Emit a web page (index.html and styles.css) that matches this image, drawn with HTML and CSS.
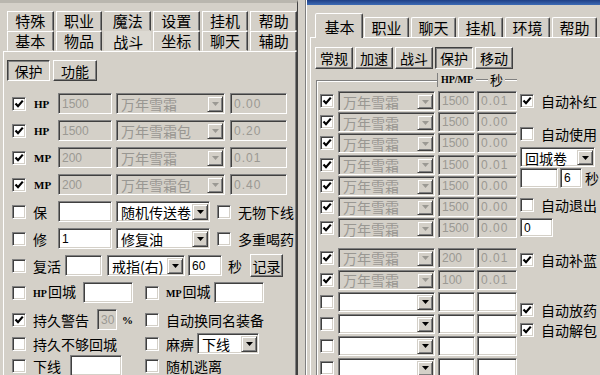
FILE: index.html
```html
<!DOCTYPE html>
<html><head><meta charset="utf-8"><link rel="stylesheet" href="styles.css"></head>
<body>
<svg class="defs" width="0" height="0"><defs>
<symbol id="ck" viewBox="0 0 10 10"><path d="M1.5 4.5 4 7.2 8.8 1.6" fill="none" stroke="#000" stroke-width="2.2"/></symbol>
<symbol id="dn" viewBox="0 0 7 4"><path d="M0 0h7L3.5 4z"/></symbol>
</defs></svg>
<div class="lwin">
  <div class="ltabs">
    <span class="tab">特殊</span><span class="tab">职业</span><span class="tab top-sel">魔法</span><span class="tab">设置</span><span class="tab">挂机</span><span class="tab">帮助</span>
    <span class="tab">基本</span><span class="tab">物品</span><span class="tab sel">战斗</span><span class="tab">坐标</span><span class="tab">聊天</span><span class="tab">辅助</span>
  </div>
  <div class="lpanel">
    <div class="subtabs lsub"><span class="btn pressed w43">保护</span><span class="btn w44">功能</span></div>
    <div class="lrows">
      <div class="r">
        <span class="cb on"><svg><use href="#ck"/></svg></span><span class="lab hp w25">HP</span>
        <span class="inp dis w54">1500</span>
        <span class="sel dis w109 ml4"><span class="st">万年雪霜</span><span class="arr"><svg><use href="#dn"/></svg></span></span>
        <span class="inp dis w57 ml5 sp">0.00</span>
      </div>
      <div class="r">
        <span class="cb on"><svg><use href="#ck"/></svg></span><span class="lab hp w25">HP</span>
        <span class="inp dis w54">1500</span>
        <span class="sel dis w109 ml4"><span class="st">万年雪霜包</span><span class="arr"><svg><use href="#dn"/></svg></span></span>
        <span class="inp dis w57 ml5 sp">0.20</span>
      </div>
      <div class="r">
        <span class="cb on"><svg><use href="#ck"/></svg></span><span class="lab hp w25">MP</span>
        <span class="inp dis w54">200</span>
        <span class="sel dis w109 ml4"><span class="st">万年雪霜</span><span class="arr"><svg><use href="#dn"/></svg></span></span>
        <span class="inp dis w57 ml5 sp">0.01</span>
      </div>
      <div class="r">
        <span class="cb on"><svg><use href="#ck"/></svg></span><span class="lab hp w25">MP</span>
        <span class="inp dis w54">200</span>
        <span class="sel dis w109 ml4"><span class="st">万年雪霜包</span><span class="arr"><svg><use href="#dn"/></svg></span></span>
        <span class="inp dis w57 ml5 sp">0.40</span>
      </div>
      <div class="r">
        <span class="cb"></span><span class="lab w25">保</span>
        <span class="inp w54"></span>
        <span class="sel w94 ml4"><span class="st">随机传送卷</span><span class="arr"><svg><use href="#dn"/></svg></span></span>
        <span class="cb ml7"></span><span class="lab ml6">无物下线</span>
      </div>
      <div class="r">
        <span class="cb"></span><span class="lab w25">修</span>
        <span class="inp w54">1</span>
        <span class="sel w94 ml4"><span class="st">修复油</span><span class="arr"><svg><use href="#dn"/></svg></span></span>
        <span class="cb ml7"></span><span class="lab ml6">多重喝药</span>
      </div>
      <div class="r">
        <span class="cb"></span><span class="lab w32">复活</span>
        <span class="inp w37"></span>
        <span class="sel w78 ml5"><span class="st">戒指(右)</span><span class="arr"><svg><use href="#dn"/></svg></span></span>
        <span class="inp w34 ml3">60</span>
        <span class="lab ml6">秒</span>
        <span class="btn w33 h23 ml8">记录</span>
      </div>
      <div class="r">
        <span class="half"><span class="cb"></span><span class="lab w50"><b class="hpsm">HP</b>回城</span><span class="inp w50"></span></span>
        <span class="cb"></span><span class="lab ml8 w48"><b class="hpsm">MP</b>回城</span><span class="inp w50"></span>
      </div>
      <div class="r mb3">
        <span class="half"><span class="cb on"><svg><use href="#ck"/></svg></span><span class="lab w64">持久警告</span><span class="inp dis w20">30</span><span class="lab ml5 pct">%</span></span>
        <span class="cb"></span><span class="lab ml8">自动换同名装备</span>
      </div>
      <div class="r mb1">
        <span class="half"><span class="cb"></span><span class="lab">持久不够回城</span></span>
        <span class="cb"></span><span class="lab ml8 w31">麻痹</span>
        <span class="sel w62"><span class="st">下线</span><span class="arr"><svg><use href="#dn"/></svg></span></span>
      </div>
      <div class="r">
        <span class="half"><span class="cb"></span><span class="lab w37">下线</span><span class="inp w52"></span></span>
        <span class="cb"></span><span class="lab ml8">随机逃离</span>
      </div>
    </div>
  </div>
</div>
<div class="gap"></div>
<div class="rwin">
  <div class="rtitle"></div>
  <div class="rtabs">
    <span class="rtab sel">基本</span><span class="rtab">职业</span><span class="rtab">聊天</span><span class="rtab">挂机</span><span class="rtab">环境</span><span class="rtab">帮助</span>
  </div>
  <div class="rpanel">
    <div class="subtabs rsub">
      <span class="btn w38">常规</span><span class="btn w38">加速</span><span class="btn w38">战斗</span><span class="btn pressed w38">保护</span><span class="btn w38">移动</span>
    </div>
    <div class="rbody">
      <div class="grp">
        <div class="ghead">
          <span class="gl1"></span>
          <span class="glab"><b>HP/MP</b></span>
          <span class="glab2"><span class="ln"></span><span class="gt">秒</span><span class="ln"></span></span>
        </div>
        <div class="glist">
          <div class="gr"><span class="cb on"><svg><use href="#ck"/></svg></span><span class="sel dis w97 ml4"><span class="st">万年雪霜</span><span class="arr"><svg><use href="#dn"/></svg></span></span><span class="inp dis w37 ml3">1500</span><span class="inp dis w40 ml2 sp">0.01</span></div>
          <div class="gr"><span class="cb on"><svg><use href="#ck"/></svg></span><span class="sel dis w97 ml4"><span class="st">万年雪霜</span><span class="arr"><svg><use href="#dn"/></svg></span></span><span class="inp dis w37 ml3">1500</span><span class="inp dis w40 ml2 sp">0.00</span></div>
          <div class="gr"><span class="cb on"><svg><use href="#ck"/></svg></span><span class="sel dis w97 ml4"><span class="st">万年雪霜</span><span class="arr"><svg><use href="#dn"/></svg></span></span><span class="inp dis w37 ml3">1500</span><span class="inp dis w40 ml2 sp">0.00</span></div>
          <div class="gr"><span class="cb on"><svg><use href="#ck"/></svg></span><span class="sel dis w97 ml4"><span class="st">万年雪霜</span><span class="arr"><svg><use href="#dn"/></svg></span></span><span class="inp dis w37 ml3">1500</span><span class="inp dis w40 ml2 sp">0.01</span></div>
          <div class="gr"><span class="cb on"><svg><use href="#ck"/></svg></span><span class="sel dis w97 ml4"><span class="st">万年雪霜</span><span class="arr"><svg><use href="#dn"/></svg></span></span><span class="inp dis w37 ml3">1500</span><span class="inp dis w40 ml2 sp">0.00</span></div>
          <div class="gr"><span class="cb on"><svg><use href="#ck"/></svg></span><span class="sel dis w97 ml4"><span class="st">万年雪霜</span><span class="arr"><svg><use href="#dn"/></svg></span></span><span class="inp dis w37 ml3">1500</span><span class="inp dis w40 ml2 sp">0.00</span></div>
          <div class="gr"><span class="cb on"><svg><use href="#ck"/></svg></span><span class="sel dis w97 ml4"><span class="st">万年雪霜</span><span class="arr"><svg><use href="#dn"/></svg></span></span><span class="inp dis w37 ml3">1500</span><span class="inp dis w40 ml2 sp">0.00</span></div>
          <div class="gr b first"><span class="cb on"><svg><use href="#ck"/></svg></span><span class="sel dis w97 ml4"><span class="st">万年雪霜</span><span class="arr"><svg><use href="#dn"/></svg></span></span><span class="inp dis w37 ml3">200</span><span class="inp dis w40 ml2 sp">0.01</span></div>
          <div class="gr b"><span class="cb on"><svg><use href="#ck"/></svg></span><span class="sel dis w97 ml4"><span class="st">万年雪霜</span><span class="arr"><svg><use href="#dn"/></svg></span></span><span class="inp dis w37 ml3">100</span><span class="inp dis w40 ml2 sp">0.01</span></div>
          <div class="gr b"><span class="cb"></span><span class="sel w97 ml4"><span class="st"></span><span class="arr"><svg><use href="#dn"/></svg></span></span><span class="inp w37 ml3"></span><span class="inp w40 ml2"></span></div>
          <div class="gr b"><span class="cb"></span><span class="sel w97 ml4"><span class="st"></span><span class="arr"><svg><use href="#dn"/></svg></span></span><span class="inp w37 ml3"></span><span class="inp w40 ml2"></span></div>
          <div class="gr b"><span class="cb"></span><span class="sel w97 ml4"><span class="st"></span><span class="arr"><svg><use href="#dn"/></svg></span></span><span class="inp w37 ml3"></span><span class="inp w40 ml2"></span></div>
          <div class="gr b"><span class="cb"></span><span class="sel w97 ml4"><span class="st"></span><span class="arr"><svg><use href="#dn"/></svg></span></span><span class="inp w37 ml3"></span><span class="inp w40 ml2"></span></div>
        </div>
      </div>
      <div class="rcol">
        <div class="cr"><span class="cb on"><svg><use href="#ck"/></svg></span><span class="lab ml7">自动补红</span></div>
        <div class="cr mt13"><span class="cb"></span><span class="lab ml7">自动使用</span></div>
        <span class="sel w75 mt3"><span class="st">回城卷</span><span class="arr"><svg><use href="#dn"/></svg></span></span>
        <div class="cr mt1"><span class="inp w38"></span><span class="inp w22 ml2">6</span><span class="lab ml3">秒</span></div>
        <div class="cr mt7"><span class="cb"></span><span class="lab ml7">自动退出</span></div>
        <span class="inp w33 h19 mt3">0</span>
        <div class="cr mt13"><span class="cb on"><svg><use href="#ck"/></svg></span><span class="lab ml7">自动补蓝</span></div>
        <div class="cr mt30"><span class="cb on"><svg><use href="#ck"/></svg></span><span class="lab ml7">自动放药</span></div>
        <div class="cr"><span class="cb on"><svg><use href="#ck"/></svg></span><span class="lab ml7">自动解包</span></div>
      </div>
    </div>
  </div>
</div>
</body></html>
```
FILE: styles.css
```css
*{box-sizing:border-box;margin:0;padding:0}
html,body{width:600px;height:375px;overflow:hidden}
body{background:#d4d0c8;font-family:"Noto Sans CJK SC","Liberation Sans",sans-serif;font-size:14px;line-height:18px;color:#000;display:flex}
.defs{position:absolute;width:0;height:0}

/* generic widgets */
.cb{width:14px;height:14px;flex:none;background:#fff;border:1px solid;border-color:#808080 #fff #fff #808080;box-shadow:inset 1px 1px #404040,inset -1px -1px #d4d0c8;display:flex;align-items:center;justify-content:center}
.cb svg{width:10px;height:10px}
.lab{flex:none;white-space:nowrap;font-size:14px;line-height:18px}
.hp{font-family:"Liberation Serif",serif;font-weight:bold;font-size:11px;padding-left:1px}
.hpsm{font-family:"Liberation Serif",serif;font-weight:bold;font-size:10px;margin-right:1px}
.pct{font-family:"Liberation Serif",serif;font-weight:bold;font-size:11px}
.inp{flex:none;height:21px;background:#fff;border:1px solid;border-color:#808080 #fff #fff #808080;box-shadow:inset 1px 1px #404040,inset -1px -1px #d4d0c8;display:flex;align-items:center;padding-left:3px;font-family:"Liberation Sans",sans-serif;font-size:12px;line-height:14px;white-space:nowrap}
.inp.dis{background:#d4d0c8;color:#9b9993}
.sp{letter-spacing:1px}
.sel{flex:none;height:21px;background:#fff;border:1px solid;border-color:#808080 #fff #fff #808080;box-shadow:inset 1px 1px #404040,inset -1px -1px #d4d0c8;display:flex;align-items:center;padding:2px 1px 1px 2px}
.sel .st{flex:1;min-width:0;white-space:nowrap;padding-left:2px;font-size:14px;line-height:16px}
.sel.dis{background:#d4d0c8}
.sel.dis .st{color:#999792}
.arr{flex:none;width:16px;height:100%;align-self:stretch;background:#d4d0c8;border:1px solid;border-color:#d4d0c8 #404040 #404040 #d4d0c8;box-shadow:inset 1px 1px #fff,inset -1px -1px #808080;display:flex;align-items:center;justify-content:center}
.arr svg{width:7px;height:4px;fill:#000}
.sel.dis .arr svg{fill:#9b9993}
.btn{flex:none;height:22px;display:flex;align-items:center;justify-content:center;border:1px solid;border-color:#fff #404040 #404040 #fff;box-shadow:inset -1px -1px #808080;font-size:14px;white-space:nowrap}
.btn.pressed{border-color:#404040 #fff #fff #404040;box-shadow:inset 1px 1px #808080}

/* widths / margins */
.w20{width:20px}.w22{width:22px}.w25{width:25px}.w31{width:31px}.w32{width:32px}.w33{width:33px}.w34{width:34px}.w37{width:37px}.w38{width:38px}.w40{width:40px}.w43{width:43px}.w44{width:44px}.w48{width:48px}.w50{width:50px}.w52{width:52px}.w54{width:54px}.w57{width:57px}.w62{width:62px}.w64{width:64px}.w75{width:75px}.w78{width:78px}.w94{width:94px}.w97{width:97px}.w109{width:109px}
.h23{height:23px}.h19{height:19px}
.ml2{margin-left:2px}.ml3{margin-left:3px}.ml4{margin-left:4px}.ml5{margin-left:5px}.ml6{margin-left:6px}.ml7{margin-left:7px}.ml8{margin-left:8px}
.mt1{margin-top:1px}.mt3{margin-top:3px}.mt7{margin-top:7px}.mt13{margin-top:13px}.mt30{margin-top:30px}

/* left window */
.lwin{width:298px;height:375px;flex:none;display:flex;flex-direction:column;border-top:3px solid #b9b6ae;border-right:1px solid #404040}
.ltabs{display:grid;grid-template-columns:repeat(6,1fr);column-gap:2px;padding:8px 0 0 7px}
.tab{height:20px;display:flex;align-items:center;justify-content:center;border:1px solid;border-color:#fff #404040 transparent #fff;box-shadow:inset -1px 0 #808080;font-size:15px;line-height:18px;white-space:nowrap}
.tab.sel{border-color:transparent;box-shadow:none;background:#dcd9d2}
.tab.top-sel{border-left-color:transparent}
.lpanel{flex:1;margin-left:3px;border-left:1px solid #fff;border-top:1px solid #fff;border-right:1px solid #404040;box-shadow:inset -1px 0 #808080;display:flex;flex-direction:column}
.subtabs{display:flex}
.lsub{padding:8px 0 0 3px;gap:3px}
.lsub .btn{height:21px}
.lrows{margin-top:12px;display:flex;flex-direction:column;padding-left:8px}
.r{height:21px;display:flex;align-items:center;margin-bottom:6px}
.r .cb+.lab{margin-left:7px}
.r.mb3{margin-bottom:3px}
.r.mb1{margin-bottom:1px}
.half{width:133px;flex:none;display:flex;align-items:center}
.half .cb+.lab{margin-left:7px}

/* gap between windows */
.gap{width:7px;flex:none;background:#d4d0c8}

/* right window */
.rwin{flex:1;height:375px;display:flex;flex-direction:column;border-left:1px solid #808080;box-shadow:inset 1px 0 #fff;padding-left:1px}
.rtitle{height:5px;flex:none;background:linear-gradient(#1f3f86,#3d6bb5)}
.rtabs{height:32px;flex:none;display:flex;align-items:flex-end;padding-left:8px}
.rtab{width:45px;height:20px;margin-left:2px;display:flex;align-items:center;justify-content:center;border:1px solid;border-bottom:none;border-color:#fff #404040 transparent #fff;box-shadow:inset -1px 0 #808080;border-radius:2px 2px 0 0;font-size:15px;line-height:18px}
.rtab.sel{width:48px;height:25px;margin-left:0;margin-right:-1px;margin-bottom:-1px;position:relative;z-index:1;background:#d4d0c8}
.rpanel{flex:1;margin-left:3px;border-left:1px solid #fff;border-top:1px solid #fff;display:flex;flex-direction:column}
.rsub{padding:9px 0 0 4px;gap:2px}
.rbody{display:flex;margin-top:4px}
.grp{width:201px;margin-left:5px;flex:none;display:flex;flex-direction:column}
.ghead{height:14px;display:flex}
.gl1{width:121px;height:7px;align-self:flex-end;border-top:1px solid #808080;border-left:1px solid #808080;box-shadow:inset 1px 1px #fff}
.glab{width:39px;display:flex;align-items:center;justify-content:center;font-family:"Liberation Serif",serif;font-size:10px;line-height:12px;border-left:1px solid #808080}
.glab2{width:41px;display:flex;align-items:center}
.glab2 .ln{flex:1;height:2px;border-top:1px solid #808080;border-bottom:1px solid #fff;align-self:center}
.glab2 .gt{font-size:13px;line-height:14px;padding:0 2px}
.glist{border-left:1px solid #808080;box-shadow:inset 1px 0 #fff;padding:4px 0 0 3px;display:flex;flex-direction:column;height:300px}
.gr{height:20px;margin-bottom:1.2px;display:flex;align-items:center}
.gr .inp,.gr .sel{height:20px}
.gr.b{margin-bottom:2px}
.gr.first{margin-top:8.6px}
.rcol{margin-left:3px;padding-top:18px;display:flex;flex-direction:column;align-items:flex-start}
.cr{height:20px;display:flex;align-items:center}
.rcol .sel{height:20px}
.rcol .inp{height:20px}
.rcol .inp.h19{height:19px}
```
